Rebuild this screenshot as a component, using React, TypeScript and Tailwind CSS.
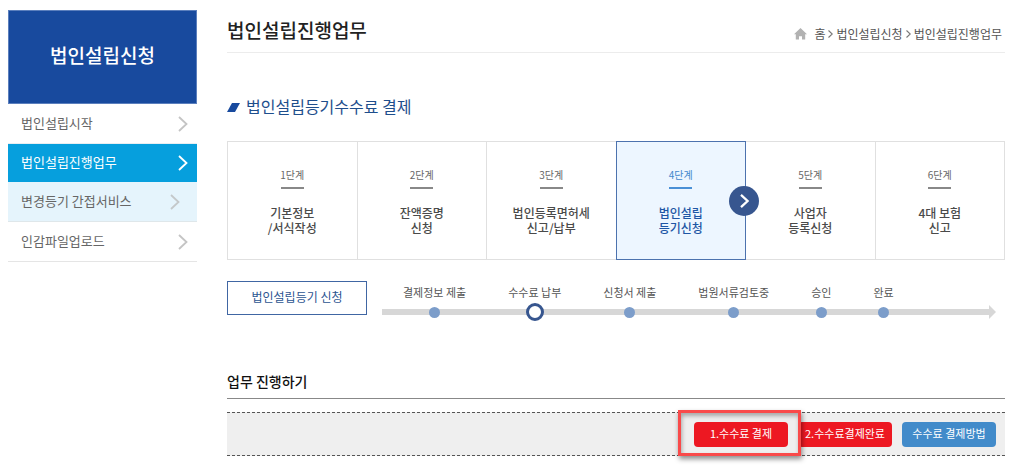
import React from "react";

interface MenuItem {
  label: string;
  itemClass: string;
  arrowClass: string;
}

interface Step {
  no: string;
  lines: [string, string];
  active?: boolean;
}

const menuItems: MenuItem[] = [
  {
    label: "법인설립시작",
    itemClass: "h-10 border-b border-[#e8eef2] text-[#666]",
    arrowClass: "text-[#c4c4c4]",
  },
  {
    label: "법인설립진행업무",
    itemClass: "h-[38px] bg-[#069fdd] text-white",
    arrowClass: "text-white",
  },
  {
    label: "변경등기 간접서비스",
    itemClass: "h-10 border-b border-[#dfe7ea] bg-[#e5f4fc] text-[#666]",
    arrowClass: "mr-2 text-[#c4c8ca]",
  },
  {
    label: "인감파일업로드",
    itemClass: "h-10 border-b border-[#e5e5e5] text-[#666]",
    arrowClass: "text-[#c4c4c4]",
  },
];

const steps: Step[] = [
  { no: "1단계", lines: ["기본정보", "/서식작성"] },
  { no: "2단계", lines: ["잔액증명", "신청"] },
  { no: "3단계", lines: ["법인등록면허세", "신고/납부"] },
  { no: "4단계", lines: ["법인설립", "등기신청"], active: true },
  { no: "5단계", lines: ["사업자", "등록신청"] },
  { no: "6단계", lines: ["4대 보험", "신고"] },
];

const progress = [
  "결제정보 제출",
  "수수료 납부",
  "신청서 제출",
  "법원서류검토중",
  "승인",
  "완료",
];
const currentProgress = 1;

const Chevron: React.FC<{ className?: string; strokeWidth?: number }> = ({
  className,
  strokeWidth = 1.8,
}) => (
  <svg
    viewBox="0 0 10 16"
    fill="none"
    stroke="currentColor"
    strokeWidth={strokeWidth}
    className={className}
    aria-hidden="true"
  >
    <path d="M1 1l7.5 7L1 15" />
  </svg>
);

const Sidebar: React.FC = () => (
  <aside className="w-[189px] shrink-0">
    <h2 className="flex h-[94px] items-center justify-center border border-[#5b7fbd] bg-[#184a9e] pb-1 text-[19px] font-medium text-white">
      법인설립신청
    </h2>
    <nav>
      <ul>
        {menuItems.map((item) => (
          <li key={item.label}>
            <a
              href="#"
              className={`flex items-center justify-between pl-[13px] pr-[9px] text-[13px] ${item.itemClass}`}
            >
              <span className="pb-[2px]">{item.label}</span>
              <Chevron className={`h-4 w-[10px] ${item.arrowClass}`} />
            </a>
          </li>
        ))}
      </ul>
    </nav>
  </aside>
);

const Breadcrumb: React.FC = () => (
  <nav
    aria-label="breadcrumb"
    className="flex items-center gap-[3px] pr-[3px] pt-[6px] text-[12px] text-[#555]"
  >
    <svg viewBox="0 0 13 12" className="mr-1 h-3 w-[13px]" aria-hidden="true">
      <path
        d="M6.5 0L0 6.2h1.8V11.6h3.2V8.2h3v3.4h3.2V6.2H13z"
        fill="#b2b2b2"
      />
    </svg>
    <a href="#">홈</a>
    <Chevron className="h-2 w-[5px] text-[#777]" strokeWidth={2.2} />
    <a href="#">법인설립신청</a>
    <Chevron className="h-2 w-[5px] text-[#777]" strokeWidth={2.2} />
    <a href="#">법인설립진행업무</a>
  </nav>
);

const StepList: React.FC = () => (
  <ol className="grid grid-cols-6 pl-px">
    {steps.map((step) => (
      <li
        key={step.no}
        className={`relative -ml-px flex h-[119px] flex-col items-center border pt-6 text-center ${
          step.active
            ? "z-10 border-[#4c72ae] bg-[#edf6ff]"
            : "border-[#e0e0e0]"
        }`}
      >
        <span
          className={`text-[10px] leading-[18px] ${
            step.active ? "text-[#3f87cc]" : "text-[#666]"
          }`}
        >
          {step.no}
        </span>
        <span
          className={`mt-[3px] h-[2px] w-[23px] ${
            step.active ? "bg-[#4a90d6]" : "bg-[#888]"
          }`}
        />
        <strong
          className={`mt-4 text-[12px] font-medium leading-[15px] ${
            step.active ? "text-[#1f56a5]" : "text-[#4a4a4a]"
          }`}
        >
          {step.lines[0]}
          <br />
          {step.lines[1]}
        </strong>
        {step.active && (
          <span className="absolute -right-[14px] top-11 flex size-[30px] items-center justify-center rounded-full bg-[#37568f] text-white">
            <Chevron className="h-[14px] w-[9px]" strokeWidth={2.6} />
          </span>
        )}
      </li>
    ))}
  </ol>
);

const ProgressTrack: React.FC = () => (
  <div className="mr-[9px] grid flex-1">
    {/* Arrow line, the dots share its grid cell */}
    <div className="col-start-1 row-start-1 flex h-[18px] items-center self-end">
      <span className="h-[6px] flex-1 bg-[#d7d7d7]" />
      <svg viewBox="0 0 7 14" className="h-[14px] w-[7px]" aria-hidden="true">
        <path d="M0 0l7 7-7 7z" fill="#d7d7d7" />
      </svg>
    </div>
    <ol className="col-start-1 row-start-1 flex gap-[42px] pl-[21px]">
      {progress.map((label, index) => (
        <li
          key={label}
          className="flex flex-col items-center whitespace-nowrap text-[11px] leading-[22px] text-[#555]"
        >
          {label}
          <span className="flex h-[18px] items-center">
            {index === currentProgress ? (
              <span className="size-[18px] rounded-full border-[3px] border-[#37568f] bg-white" />
            ) : (
              <span className="size-[11px] rounded-full bg-[#7c9dca]" />
            )}
          </span>
        </li>
      ))}
    </ol>
  </div>
);

const actionClass =
  "h-[25px] w-[94px] rounded-[4px] pb-[2px] text-[11px] text-white whitespace-nowrap";

const App: React.FC = () => {
  return (
    <div className="flex gap-[30px] bg-white pb-4 pl-2 pr-[19px] pt-[10px] font-['Noto_Sans_CJK_KR',sans-serif]">
      <Sidebar />

      <main className="min-w-0 flex-1">
        <header className="flex h-[43px] items-center justify-between border-b border-[#ececec]">
          <h1 className="pb-[2px] text-[19px] font-medium text-[#222]">
            법인설립진행업무
          </h1>
          <Breadcrumb />
        </header>

        <h2 className="mt-[41px] flex h-6 items-center gap-[6px] text-[16px] text-[#1e4e8c]">
          <svg viewBox="0 0 13 9" className="mt-[2px] h-[9px] w-[13px]" aria-hidden="true">
            <path d="M5 0h8L8 9H0z" fill="#184a9e" />
          </svg>
          법인설립등기수수료 결제
        </h2>

        <div className="mt-[23px]">
          <StepList />
        </div>

        <div className="mt-[21px] flex items-start gap-[15px]">
          <button
            type="button"
            className="h-[34px] w-[140px] border border-[#4066a3] pb-[2px] text-[12px] text-[#2c5591]"
          >
            법인설립등기 신청
          </button>
          <ProgressTrack />
        </div>

        <h3 className="mt-[46px] flex h-8 items-center border-b border-[#888] pb-[2px] text-[14px] font-medium text-[#111]">
          업무 진행하기
        </h3>

        <div className="mt-[13px] flex h-11 items-center justify-end gap-[10px] border-y border-dashed border-[#555] bg-[#efefef] pr-[9px]">
          <div className="relative z-10">
            <button type="button" className={`${actionClass} block bg-[#ed1822]`}>
              1.수수료 결제
            </button>
            {/* Highlight frame */}
            <span className="pointer-events-none absolute -bottom-[9px] -left-[16px] -right-[13px] -top-[12px] border-[3px] border-[#f94a4a] shadow-[1px_3px_5px_rgba(0,0,0,0.45),inset_1px_3px_4px_rgba(0,0,0,0.3)]" />
          </div>
          <button type="button" className={`${actionClass} bg-[#ed1822]`}>
            2.수수료결제완료
          </button>
          <button type="button" className={`${actionClass} bg-[#428bca]`}>
            수수료 결제방법
          </button>
        </div>
      </main>
    </div>
  );
};

export default App;
